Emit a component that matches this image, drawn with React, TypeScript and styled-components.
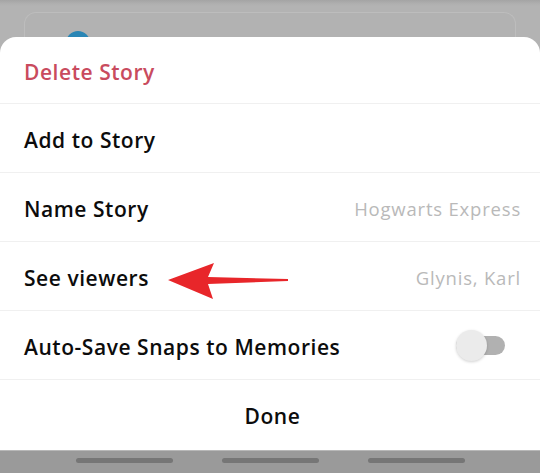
import React from "react";
import styled, { createGlobalStyle } from "styled-components";

const Global = createGlobalStyle`
  html, body { margin: 0; padding: 0; }
  body { font-family: "Open Sans", "Noto Sans", sans-serif; background: #b3b3b3; }
`;

const Screen = styled.div`
  width: 540px;
  height: 473px;
  overflow: hidden;
  display: flex;
  flex-direction: column;
  background: #b3b3b3;
`;

const Backdrop = styled.div`
  height: 37px;
  flex: none;
  display: flex;
  flex-direction: column;
  background: linear-gradient(#a4a4a4 0, #b0b0b0 4px, #b3b3b3 6px);
`;

const GhostCard = styled.div`
  margin: 12px 24px 0 24px;
  flex: 1;
  border: 1px solid #bdbdbd;
  border-bottom: none;
  border-radius: 12px 12px 0 0;
  background: #b2b2b2;
  position: relative;
  overflow: hidden;
`;

const Avatar = styled.div`
  position: absolute;
  left: 41px;
  top: 18px;
  width: 24px;
  height: 24px;
  border-radius: 50%;
  background: #2a86b5;
`;

const Sheet = styled.div`
  flex: 1;
  background: #ffffff;
  border-radius: 16px 16px 0 0;
  display: flex;
  flex-direction: column;
  position: relative;
`;

const Row = styled.div<{ $h?: number; $center?: boolean; $last?: boolean }>`
  height: ${(p) => p.$h ?? 69}px;
  flex: none;
  display: flex;
  align-items: center;
  justify-content: ${(p) => (p.$center ? "center" : "space-between")};
  padding: 3px 19px 0 24px;
  box-sizing: border-box;
  border-bottom: ${(p) => (p.$last ? "none" : "1px solid #f0f0f0")};
  position: relative;
`;

const Label = styled.span<{ $danger?: boolean }>`
  font-family: "Open Sans", "Noto Sans", sans-serif;
  font-weight: 600;
  font-size: 21px;
  letter-spacing: 0.55px;
  color: ${(p) => (p.$danger ? "#c94b5e" : "#0c0c0c")};
`;

const Value = styled.span`
  font-family: "Open Sans", "Noto Sans", sans-serif;
  font-weight: 400;
  font-size: 18.5px;
  letter-spacing: 0.8px;
  color: #b9b9b9;
`;

const Toggle = styled.div`
  position: relative;
  width: 49px;
  height: 19px;
  margin-right: 16px;
  margin-top: -3px;
  border-radius: 10px;
  background: #b1b1b1;
`;

const Knob = styled.div`
  position: absolute;
  left: 0;
  top: -6px;
  width: 31px;
  height: 31px;
  border-radius: 50%;
  background: #ebebeb;
  box-shadow: 0 1px 3px rgba(0, 0, 0, 0.18);
`;

const Arrow = styled.svg`
  position: absolute;
  left: 166px;
  top: 18px;
  overflow: visible;
`;

const NavBar = styled.div`
  height: 23px;
  flex: none;
  background: #9a9a9a;
  border-top: 1px solid #b8b8b8;
  box-sizing: border-box;
  display: flex;
  align-items: center;
  justify-content: center;
  gap: 49px;
  padding-bottom: 4px;
`;

const Pill = styled.div`
  width: 97px;
  height: 5px;
  border-radius: 3px;
  background: #767676;
`;

export default function App() {
  return (
    <>
      <Global />
      <Screen>
        <Backdrop>
          <GhostCard>
            <Avatar />
          </GhostCard>
        </Backdrop>
        <Sheet>
          <Row $h={67}>
            <Label $danger>Delete Story</Label>
          </Row>
          <Row>
            <Label>Add to Story</Label>
          </Row>
          <Row>
            <Label>Name Story</Label>
            <Value>Hogwarts Express</Value>
          </Row>
          <Row>
            <Label>See viewers</Label>
            <Value>Glynis, Karl</Value>
            <Arrow width="124" height="38" viewBox="0 0 124 38">
              <path
                d="M2 20 L48 3 L42 17 L122 19 L122 21 L42 24 L47 39 Z"
                fill="#e8262a"
              />
            </Arrow>
          </Row>
          <Row>
            <Label>Auto-Save Snaps to Memories</Label>
            <Toggle>
              <Knob />
            </Toggle>
          </Row>
          <Row $center $last>
            <Label>Done</Label>
          </Row>
        </Sheet>
        <NavBar>
          <Pill />
          <Pill />
          <Pill />
        </NavBar>
      </Screen>
    </>
  );
}
